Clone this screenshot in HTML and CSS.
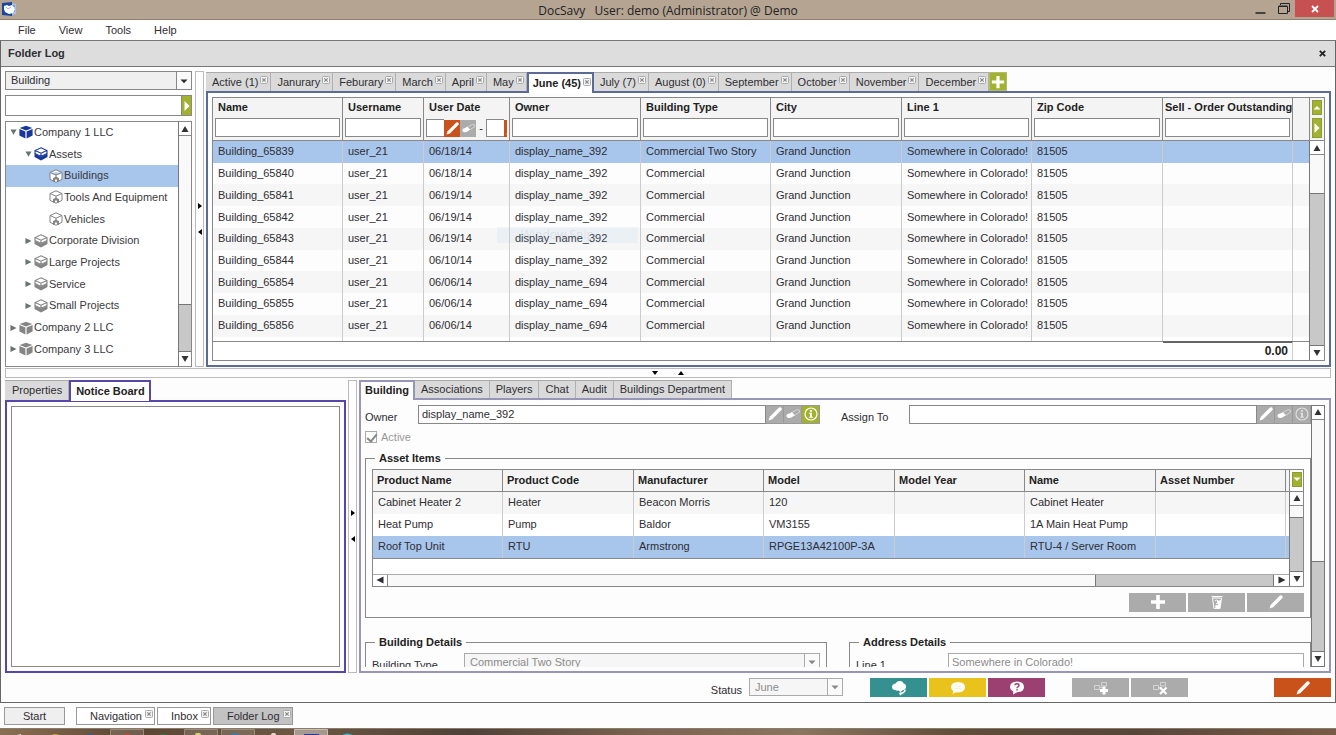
FILE: index.html
```html
<!DOCTYPE html>
<html lang="en">
<head>
    <meta charset="UTF-8">
    <meta name="viewport" content="width=device-width, initial-scale=1.0">
    <title>DocSavy</title>
    <link rel="stylesheet" href="styles.css">
</head>
<body>
    <!-- Icon sprite -->
    <svg class="sprite" aria-hidden="true">
        <symbol id="close" viewBox="0 0 8 8"><rect x=".5" y=".5" width="7" height="7" rx="1" fill="#f4f4f4" stroke="#aaa"/><path d="M2.3 2.3l3.4 3.4M5.7 2.3L2.3 5.7" stroke="#888" stroke-width="1.2"/></symbol>
        <symbol id="up" viewBox="0 0 8 8"><path d="M4 1l3.5 6h-7z" fill="currentColor"/></symbol>
        <symbol id="down" viewBox="0 0 8 8"><path d="M4 7L.5 1h7z" fill="currentColor"/></symbol>
        <symbol id="right" viewBox="0 0 8 8"><path d="M7.5 4l-7 3.5v-7z" fill="currentColor"/></symbol>
        <symbol id="left" viewBox="0 0 8 8"><path d="M.5 4l7-3.5v7z" fill="currentColor"/></symbol>
        <symbol id="drop" viewBox="0 0 8 8"><path d="M.5 2.5h7L4 6.2z" fill="currentColor"/></symbol>
        <symbol id="pencil" viewBox="0 0 16 16"><path d="M1.5 14.5l1.3-3.7L12 1.600q.9-.8 1.800 0l.6.6q.8.9 0 1.800L5.200 13.200z" fill="#fff"/></symbol>
        <symbol id="eraser" viewBox="0 0 16 16"><path d="M6 7l6-3.300q3.200-.5 2.600 2.400L9.500 9.300z" fill="none" stroke="#d5d5d5"/><path d="M1.500 9.500Q1.500 8 3.600 7.700L7 6.200l2.800 3-3 2.100q-2.200 1-4 .4-1.500-.5-1.300-2.200z" fill="#fff"/></symbol>
        <symbol id="info" viewBox="0 0 16 16"><circle cx="8" cy="8" r="6" fill="none" stroke="#fff" stroke-width="1.200"/><path d="M7 4h2v1.700H7zM6 6.800h3v4h1v1H6v-1h1v-3H6z" fill="#fff"/></symbol>
        <symbol id="plus" viewBox="0 0 16 16"><path d="M6.200 1h3.600v5.200H15v3.600H9.800V15H6.200V9.800H1V6.200h5.200z" fill="#fff"/></symbol>
        <symbol id="bin" viewBox="0 0 16 16"><path d="M2.500 2.500h11M3.500 4l1.500 10.500h6L12.500 4z" fill="none" stroke="#fff"/><path d="M8 7l4-1-1 8H6.500L6 11.500l3-.5z" fill="#fff"/><path d="M6 7q2-2 3 0t-2 3" fill="none" stroke="#fff"/></symbol>
        <symbol id="cloud" viewBox="0 0 16 16"><path d="M1 7q0-3 3.500-3.500Q6 .5 9 1q3 0 3.500 2.500Q15.500 4 15 7.500q-.5 2.500-3 2.500L9.500 12l-2-1.500q-2 .5-3-.5Q1 10 1 7z" fill="#fff"/><path d="M8 12.800l4-.8 2-2.800 1 1.500-2 2.300-4 2.500z" fill="#fff"/></symbol>
        <symbol id="bubble" viewBox="0 0 16 16"><path d="M8 2q7 .3 7 5.300T8 12.500l-2.200-.2L2.500 14l.8-3Q1 9.800 1 7.300 1 2.300 8 2z" fill="#fff"/><path d="M4.500 6h7M4.500 8.500h7" stroke="#faf0c4"/></symbol>
        <symbol id="ask" viewBox="0 0 16 16"><path d="M8 1.500q7 .3 7 5.500T8 12.200L4 14.500l.3-3Q1 9.800 1 7 1 1.800 8 1.500z" fill="#fff"/><path d="M6 5.300q0-1.500 2-1.500t2 1.600q0 1-1 1.400-1 .4-1 1.400" fill="none" stroke="#9b4070" stroke-width="1.400"/><path d="M7.200 9.200h1.600v1.300H7.200z" fill="#9b4070"/></symbol>
        <symbol id="link-add" viewBox="0 0 16 16"><path d="M1.500 5.500h5v4h-5zM8.500 2.500h5V6h-5zM6.500 7.500h3" fill="none" stroke="#d4d4d4"/><path d="M9.500 6.500h3V9H15v3h-2.500v2.500h-3V12H7V9h2.500z" fill="#fff"/></symbol>
        <symbol id="link-del" viewBox="0 0 16 16"><path d="M1.500 5.500h5v4h-5zM8.500 2.500h5V6h-5zM6.500 7.500h3" fill="none" stroke="#d4d4d4"/><path d="M8 7.500l6.500 6.500M14.500 7.500L8 14" stroke="#fff" stroke-width="2.200"/></symbol>
        <symbol id="cube" viewBox="0 0 14 14"><path d="M7 .8L13.300 3 7 5.600.7 3zM.4 4l6 2.500v7L.4 10.600zM13.600 4l-6 2.500v7l6-2.900z" fill="currentColor"/></symbol>
        <symbol id="cube-half" viewBox="0 0 14 14"><path d="M7 .8l6 2.700v3L7 9.500l-6-3v-3zM1 3.500l6 2.700 6-2.700M7 6.200v3" fill="#fff" stroke="currentColor" stroke-width="1.100"/><path d="M.5 6.500L7 9.800l6.500-3.300V10L7 13.400.5 10z" fill="currentColor"/></symbol>
        <symbol id="cube-open" viewBox="0 0 14 14"><path d="M7 .8l6 2.700v6.800L7 13.300l-6-3V3.500zM1 3.500l6 2.700 6-2.700M7 6v2" fill="#fff" stroke="currentColor"/><path d="M4 13V9.200l3-1.700 3 1.700V13H8v-2.500H6V13z" fill="currentColor"/></symbol>
    </svg>

    <header class="titlebar">
        <svg class="app-logo" viewBox="0 0 14 14"><path d="M7 1l7 1v10l-7 1z" fill="#a9c0e8"/><path d="M8 4h5M8 6.500h5M8 9h5" stroke="#5277bf"/><path d="M0 1l10-1v14L0 13z" fill="#17479e"/><path d="M2 4l3-1 2 1 3-1 3 4-2 4-4 1-4-2-1-3z" fill="#fff"/><path d="M4 5l2 2 3-2" fill="none" stroke="#9bb0db"/></svg>
        <h1 class="app-title">DocSavy &nbsp; User: demo (Administrator) @ Demo</h1>
        <div class="window-buttons">
            <button class="win-btn" aria-label="Minimize"><svg width="11" height="12" viewBox="0 0 11 12"><path d="M.5 11h10" stroke="#222" stroke-width="1.500"/></svg></button>
            <button class="win-btn" aria-label="Restore"><svg width="12" height="11" viewBox="0 0 12 11"><path d="M2.500 2V.5h9v8H10" fill="none" stroke="#222"/><path d="M.5 3.500h9v7h-9zM.5 3h9" fill="none" stroke="#222"/></svg></button>
            <button class="win-btn win-close" aria-label="Close"><svg width="8" height="8" viewBox="0 0 8 8"><path d="M1 1l6 6M7 1L1 7" stroke="#fff" stroke-width="1.800"/></svg></button>
        </div>
    </header>

    <nav class="menubar">
        <button>File</button>
        <button>View</button>
        <button>Tools</button>
        <button>Help</button>
    </nav>

    <main class="window">
        <div class="window-head">
            <h2>Folder Log</h2>
            <button class="window-x" aria-label="Close Folder Log"><svg width="7" height="7" viewBox="0 0 7 7"><path d="M.8.8l5.400 5.400M6.200.8L.8 6.200" stroke="#222" stroke-width="1.800"/></svg></button>
        </div>

        <div class="panes">
            <section class="upper">
                <aside class="sidebar">
                    <div class="select-box">
                        <select aria-label="Folder type"><option>Building</option></select>
                        <span class="select-arrow"><svg width="8" height="8"><use href="#drop"/></svg></span>
                    </div>
                    <div class="search">
                        <input type="text" aria-label="Search folders">
                        <button class="green" aria-label="Search"><svg width="6" height="12" viewBox="0 0 6 12"><path d="M.5 1l5 5-5 5z" fill="#fff"/></svg></button>
                    </div>
                    <div class="tree-box">
                        <ul class="tree">
                            <li class="lvl0 blue"><svg class="arrow"><use href="#down"/></svg><svg class="node"><use href="#cube"/></svg>Company 1 LLC</li>
                            <li class="lvl1 blue"><svg class="arrow"><use href="#down"/></svg><svg class="node"><use href="#cube-half"/></svg>Assets</li>
                            <li class="lvl2 selected"><svg class="node"><use href="#cube-open"/></svg>Buildings</li>
                            <li class="lvl2"><svg class="node"><use href="#cube-open"/></svg>Tools And Equipment</li>
                            <li class="lvl2"><svg class="node"><use href="#cube-open"/></svg>Vehicles</li>
                            <li class="lvl1"><svg class="arrow"><use href="#right"/></svg><svg class="node"><use href="#cube-half"/></svg>Corporate Division</li>
                            <li class="lvl1"><svg class="arrow"><use href="#right"/></svg><svg class="node"><use href="#cube-half"/></svg>Large Projects</li>
                            <li class="lvl1"><svg class="arrow"><use href="#right"/></svg><svg class="node"><use href="#cube-half"/></svg>Service</li>
                            <li class="lvl1"><svg class="arrow"><use href="#right"/></svg><svg class="node"><use href="#cube-half"/></svg>Small Projects</li>
                            <li class="lvl0"><svg class="arrow"><use href="#right"/></svg><svg class="node"><use href="#cube"/></svg>Company 2 LLC</li>
                            <li class="lvl0"><svg class="arrow"><use href="#right"/></svg><svg class="node"><use href="#cube"/></svg>Company 3 LLC</li>
                        </ul>
                        <div class="scroll scroll-tree">
                            <button aria-label="Scroll up"><svg width="8" height="8"><use href="#up"/></svg></button>
                            <span class="track"></span>
                            <span class="thumb"></span>
                            <button aria-label="Scroll down"><svg width="8" height="8"><use href="#down"/></svg></button>
                        </div>
                    </div>
                </aside>

                <div class="split-v">
                    <svg width="4" height="6" viewBox="0 0 4 6"><path d="M0 0l4 3-4 3z"/></svg>
                    <svg width="4" height="6" viewBox="0 0 4 6"><path d="M4 0L0 3l4 3z"/></svg>
                </div>

                <section class="tabset months">
                    <div class="tabs">
                        <div class="tab"><button>Active (1)</button><button class="tab-x" aria-label="Close tab"><svg><use href="#close"/></svg></button></div>
                        <div class="tab"><button>Janurary</button><button class="tab-x" aria-label="Close tab"><svg><use href="#close"/></svg></button></div>
                        <div class="tab"><button>Feburary</button><button class="tab-x" aria-label="Close tab"><svg><use href="#close"/></svg></button></div>
                        <div class="tab"><button>March</button><button class="tab-x" aria-label="Close tab"><svg><use href="#close"/></svg></button></div>
                        <div class="tab"><button>April</button><button class="tab-x" aria-label="Close tab"><svg><use href="#close"/></svg></button></div>
                        <div class="tab"><button>May</button><button class="tab-x" aria-label="Close tab"><svg><use href="#close"/></svg></button></div>
                        <div class="tab active"><button>June (45)</button><button class="tab-x" aria-label="Close tab"><svg><use href="#close"/></svg></button></div>
                        <div class="tab"><button>July (7)</button><button class="tab-x" aria-label="Close tab"><svg><use href="#close"/></svg></button></div>
                        <div class="tab"><button>August (0)</button><button class="tab-x" aria-label="Close tab"><svg><use href="#close"/></svg></button></div>
                        <div class="tab"><button>September</button><button class="tab-x" aria-label="Close tab"><svg><use href="#close"/></svg></button></div>
                        <div class="tab"><button>October</button><button class="tab-x" aria-label="Close tab"><svg><use href="#close"/></svg></button></div>
                        <div class="tab"><button>November</button><button class="tab-x" aria-label="Close tab"><svg><use href="#close"/></svg></button></div>
                        <div class="tab"><button>December</button><button class="tab-x" aria-label="Close tab"><svg><use href="#close"/></svg></button></div>
                        <button class="tab-add green" aria-label="Add tab"><svg width="14" height="14"><use href="#plus"/></svg></button>
                    </div>
                    <div class="tab-body">
                        <div class="grid">
                            <table class="log">
                                <colgroup>
                                    <col class="w130"><col class="w81"><col class="w86"><col class="w131"><col class="w130"><col class="w131"><col class="w130"><col class="w131"><col class="w130"><col>
                                </colgroup>
                                <thead>
                                    <tr>
                                        <th><label>Name<input type="text"></label></th>
                                        <th><label>Username<input type="text"></label></th>
                                        <th>
                                            <label for="dateFrom">User Date</label>
                                            <div class="date-filter">
                                                <input type="text" id="dateFrom">
                                                <button class="orange" aria-label="Pick start date"><svg width="15" height="15"><use href="#pencil"/></svg></button>
                                                <button class="grey" aria-label="Clear start date"><svg width="15" height="15"><use href="#eraser"/></svg></button>
                                                <span>-</span>
                                                <input type="text" aria-label="End date">
                                                <button class="orange" aria-label="Pick end date"><svg width="15" height="15"><use href="#pencil"/></svg></button>
                                            </div>
                                        </th>
                                        <th><label>Owner<input type="text"></label></th>
                                        <th><label>Building Type<input type="text"></label></th>
                                        <th><label>City<input type="text"></label></th>
                                        <th><label>Line 1<input type="text"></label></th>
                                        <th><label>Zip Code<input type="text"></label></th>
                                        <th><label class="long">Sell - Order Outstanding<input type="text"></label></th>
                                        <th></th>
                                    </tr>
                                </thead>
                                <tbody>
                                    <tr class="selected"><td>Building_65839</td><td>user_21</td><td>06/18/14</td><td>display_name_392</td><td>Commercial Two Story</td><td>Grand Junction</td><td>Somewhere in Colorado!</td><td>81505</td><td></td><td></td></tr>
                                    <tr><td>Building_65840</td><td>user_21</td><td>06/18/14</td><td>display_name_392</td><td>Commercial</td><td>Grand Junction</td><td>Somewhere in Colorado!</td><td>81505</td><td></td><td></td></tr>
                                    <tr><td>Building_65841</td><td>user_21</td><td>06/19/14</td><td>display_name_392</td><td>Commercial</td><td>Grand Junction</td><td>Somewhere in Colorado!</td><td>81505</td><td></td><td></td></tr>
                                    <tr><td>Building_65842</td><td>user_21</td><td>06/19/14</td><td>display_name_392</td><td>Commercial</td><td>Grand Junction</td><td>Somewhere in Colorado!</td><td>81505</td><td></td><td></td></tr>
                                    <tr><td>Building_65843</td><td>user_21</td><td>06/19/14</td><td class="ghost-cell"><span class="ghost">Window Snip</span>display_name_392</td><td>Commercial</td><td>Grand Junction</td><td>Somewhere in Colorado!</td><td>81505</td><td></td><td></td></tr>
                                    <tr><td>Building_65844</td><td>user_21</td><td>06/10/14</td><td>display_name_392</td><td>Commercial</td><td>Grand Junction</td><td>Somewhere in Colorado!</td><td>81505</td><td></td><td></td></tr>
                                    <tr><td>Building_65854</td><td>user_21</td><td>06/06/14</td><td>display_name_694</td><td>Commercial</td><td>Grand Junction</td><td>Somewhere in Colorado!</td><td>81505</td><td></td><td></td></tr>
                                    <tr><td>Building_65855</td><td>user_21</td><td>06/06/14</td><td>display_name_694</td><td>Commercial</td><td>Grand Junction</td><td>Somewhere in Colorado!</td><td>81505</td><td></td><td></td></tr>
                                    <tr><td>Building_65856</td><td>user_21</td><td>06/06/14</td><td>display_name_694</td><td>Commercial</td><td>Grand Junction</td><td>Somewhere in Colorado!</td><td>81505</td><td></td><td></td></tr>
                                    <tr class="spacer"><td></td><td></td><td></td><td></td><td></td><td></td><td></td><td></td><td></td><td></td></tr>
                                </tbody>
                                <tfoot>
                                    <tr><td colspan="8"></td><td class="total">0.00</td><td></td></tr>
                                </tfoot>
                            </table>
                            <div class="grid-side">
                                <div class="side-head">
                                    <button class="green side-up" aria-label="Collapse filters"><svg width="8" height="8" viewBox="0 0 8 8"><path d="M4 2l3.500 3.500h-7z" fill="#fff"/></svg></button>
                                    <button class="green side-go" aria-label="Apply filters"><svg width="6" height="12" viewBox="0 0 6 12"><path d="M.5 1l5 5-5 5z" fill="#fff"/></svg></button>
                                </div>
                                <div class="scroll scroll-log">
                                    <button aria-label="Scroll up"><svg width="8" height="8"><use href="#up"/></svg></button>
                                    <span class="track"></span>
                                    <span class="thumb"></span>
                                    <button aria-label="Scroll down"><svg width="8" height="8"><use href="#down"/></svg></button>
                                </div>
                            </div>
                        </div>
                    </div>
                </section>
            </section>

            <div class="split-h">
                <svg width="6" height="4" viewBox="0 0 6 4"><path d="M0 0h6L3 4z"/></svg>
                <svg width="6" height="4" viewBox="0 0 6 4"><path d="M0 4h6L3 0z"/></svg>
            </div>

            <section class="lower">
                <section class="tabset notice">
                    <div class="tabs">
                        <div class="tab"><button>Properties</button></div>
                        <div class="tab active"><button>Notice Board</button></div>
                    </div>
                    <div class="tab-body"><div class="board"></div></div>
                </section>

                <div class="split-v">
                    <svg width="4" height="6" viewBox="0 0 4 6"><path d="M0 0l4 3-4 3z"/></svg>
                    <svg width="4" height="6" viewBox="0 0 4 6"><path d="M4 0L0 3l4 3z"/></svg>
                </div>

                <section class="tabset details">
                    <div class="tabs">
                        <div class="tab active"><button>Building</button></div>
                        <div class="tab"><button>Associations</button></div>
                        <div class="tab"><button>Players</button></div>
                        <div class="tab"><button>Chat</button></div>
                        <div class="tab"><button>Audit</button></div>
                        <div class="tab"><button>Buildings Department</button></div>
                    </div>
                    <div class="tab-body">
                        <form class="form">
                            <div class="owner-row">
                                <label for="owner" class="owner-label">Owner</label>
                                <div class="picker">
                                    <input type="text" id="owner" value="display_name_392">
                                    <button type="button" class="grey" aria-label="Edit owner"><svg width="16" height="16"><use href="#pencil"/></svg></button>
                                    <button type="button" class="grey" aria-label="Clear owner"><svg width="16" height="16"><use href="#eraser"/></svg></button>
                                    <button type="button" class="green" aria-label="Owner info"><svg width="16" height="16"><use href="#info"/></svg></button>
                                </div>
                                <label for="assign" class="assign-label">Assign To</label>
                                <div class="picker">
                                    <input type="text" id="assign">
                                    <button type="button" class="grey" aria-label="Edit assignee"><svg width="16" height="16"><use href="#pencil"/></svg></button>
                                    <button type="button" class="grey" aria-label="Clear assignee"><svg width="16" height="16"><use href="#eraser"/></svg></button>
                                    <button type="button" class="grey faded" aria-label="Assignee info"><svg width="16" height="16"><use href="#info"/></svg></button>
                                </div>
                            </div>
                            <label class="check"><input type="checkbox" checked disabled>Active</label>

                            <fieldset class="assets">
                                <legend>Asset Items</legend>
                                <div class="asset-grid">
                                    <div class="asset-main">
                                        <table class="asset-table">
                                            <colgroup>
                                                <col class="w130"><col class="w131"><col class="w130"><col class="w131"><col class="w130"><col class="w131"><col class="w130"><col>
                                            </colgroup>
                                            <thead>
                                                <tr><th>Product Name</th><th>Product Code</th><th>Manufacturer</th><th>Model</th><th>Model Year</th><th>Name</th><th>Asset Number</th><th></th></tr>
                                            </thead>
                                            <tbody>
                                                <tr><td>Cabinet Heater 2</td><td>Heater</td><td>Beacon Morris</td><td>120</td><td></td><td>Cabinet Heater</td><td></td><td></td></tr>
                                                <tr><td>Heat Pump</td><td>Pump</td><td>Baldor</td><td>VM3155</td><td></td><td>1A Main Heat Pump</td><td></td><td></td></tr>
                                                <tr class="selected"><td>Roof Top Unit</td><td>RTU</td><td>Armstrong</td><td>RPGE13A42100P-3A</td><td></td><td>RTU-4 / Server Room</td><td></td><td></td></tr>
                                            </tbody>
                                        </table>
                                        <div class="hscroll">
                                            <button type="button" aria-label="Scroll left"><svg width="8" height="8"><use href="#left"/></svg></button>
                                            <span class="track"></span>
                                            <span class="thumb"></span>
                                            <button type="button" aria-label="Scroll right"><svg width="8" height="8"><use href="#right"/></svg></button>
                                        </div>
                                    </div>
                                    <div class="asset-side">
                                        <div class="asset-side-head"><button type="button" class="green side-up" aria-label="Expand filters"><svg width="8" height="8" viewBox="0 0 8 8"><path d="M4 6L.5 2.500h7z" fill="#fff"/></svg></button></div>
                                        <div class="scroll scroll-assets">
                                            <button type="button" aria-label="Scroll up"><svg width="8" height="8"><use href="#up"/></svg></button>
                                            <span class="track"></span>
                                            <span class="thumb"></span>
                                            <button type="button" aria-label="Scroll down"><svg width="8" height="8"><use href="#down"/></svg></button>
                                        </div>
                                    </div>
                                </div>
                                <div class="asset-actions">
                                    <button type="button" class="action grey" aria-label="Add asset"><svg><use href="#plus"/></svg></button>
                                    <button type="button" class="action grey" aria-label="Delete asset"><svg><use href="#bin"/></svg></button>
                                    <button type="button" class="action grey" aria-label="Edit asset"><svg><use href="#pencil"/></svg></button>
                                </div>
                            </fieldset>

                            <div class="detail-sets">
                                <fieldset>
                                    <legend>Building Details</legend>
                                    <div class="detail-row">
                                        <label for="buildingType">Building Type</label>
                                        <div class="select-box disabled">
                                            <select id="buildingType" disabled><option>Commercial Two Story</option></select>
                                            <span class="select-arrow"><svg width="8" height="8"><use href="#drop"/></svg></span>
                                        </div>
                                    </div>
                                </fieldset>
                                <fieldset>
                                    <legend>Address Details</legend>
                                    <div class="detail-row">
                                        <label for="line1">Line 1</label>
                                        <input type="text" id="line1" value="Somewhere in Colorado!" disabled>
                                    </div>
                                </fieldset>
                            </div>
                        </form>
                        <div class="scroll scroll-form">
                            <button aria-label="Scroll up"><svg width="8" height="8"><use href="#up"/></svg></button>
                            <span class="track"></span>
                            <span class="thumb"></span>
                            <button aria-label="Scroll down"><svg width="8" height="8"><use href="#down"/></svg></button>
                        </div>
                    </div>
                </section>
            </section>

            <footer class="statusbar">
                <label for="status">Status</label>
                <div class="select-box disabled status-select">
                    <select id="status" disabled><option>June</option></select>
                    <span class="select-arrow"><svg width="8" height="8"><use href="#drop"/></svg></span>
                </div>
                <div class="action-group talk">
                    <button class="action teal" aria-label="Share"><svg><use href="#cloud"/></svg></button>
                    <button class="action yellow" aria-label="Comment"><svg><use href="#bubble"/></svg></button>
                    <button class="action purple" aria-label="Question"><svg><use href="#ask"/></svg></button>
                </div>
                <div class="action-group links">
                    <button class="action grey" aria-label="Add link"><svg><use href="#link-add"/></svg></button>
                    <button class="action grey" aria-label="Remove link"><svg><use href="#link-del"/></svg></button>
                </div>
                <button class="action orange" aria-label="Edit"><svg><use href="#pencil"/></svg></button>
            </footer>
        </div>
    </main>

    <nav class="dock">
        <button class="start">Start</button>
        <div class="dock-item"><button>Navigation</button><button class="tab-x" aria-label="Close Navigation"><svg><use href="#close"/></svg></button></div>
        <div class="dock-item"><button>Inbox</button><button class="tab-x" aria-label="Close Inbox"><svg><use href="#close"/></svg></button></div>
        <div class="dock-item current"><button>Folder Log</button><button class="tab-x" aria-label="Close Folder Log"><svg><use href="#close"/></svg></button></div>
    </nav>

    <!-- Desktop taskbar, only its top edge shows -->
    <div class="taskbar">
        <svg width="400" height="7" viewBox="0 0 400 7">
            <path d="M110.500 7V.5h33V7M184.500 7V.5h33V7M221.500 7V.5h33V7" fill="#ffffff22" stroke="#9a8a78"/>
            <path d="M294.500 7V.5h33V7" fill="#ffffff66" stroke="#c8beb4"/>
            <path d="M12 7l9-2v2z" fill="#ddd"/>
            <path d="M50 7q4-3 9-1v1z" fill="#e8c620"/>
            <path d="M83 7q6-4 13 0z" fill="#2c5aa0"/>
            <path d="M121 7q6-4 11 0z" fill="#d8412c"/>
            <path d="M157 7q6-4 13 0z" fill="#237a45"/>
            <path d="M194 7l2-3h4l2 3z" fill="#d8d06a"/>
            <path d="M229 7q5-5 13 0z" fill="#2283c8"/>
            <path d="M270 7l2-3h3l2 3z" fill="#e6d0c8"/>
            <path d="M304 7V5h15v2z" fill="#1d3d9c"/>
            <path d="M341 7q6-5 13 0z" fill="#36b1e4"/>
        </svg>
    </div>
</body>
</html>
```
FILE: styles.css
```css
* {
    box-sizing: border-box;
}
body {
    margin: 0;
    height: 100vh;
    display: flex;
    flex-direction: column;
    overflow: hidden;
    background: #fdfdfd;
    color: #2e2e33;
    font-family: "Liberation Sans", Arial, sans-serif;
    font-size: 11px;
    line-height: 13px;
}
button, input, select {
    font: inherit;
    color: inherit;
    margin: 0;
    border-radius: 0;
}
button {
    padding: 0;
    border: 0;
    background: none;
    display: flex;
    align-items: center;
    justify-content: center;
}
input[type="text"] {
    min-width: 0;
    border: 1px solid #888;
    background: #fff;
    padding: 0 3px;
}
h1, h2, ul {
    margin: 0;
    padding: 0;
}
svg {
    display: block;
    flex: none;
}
.sprite {
    position: absolute;
    width: 0;
    height: 0;
}

/* colours for buttons */
.green { background: #a2b230; }
.orange { background: #c8521a; }
.grey { background: #ababab; }
.teal { background: #35918f; }
.yellow { background: #e9c21c; }
.purple { background: #9b4070; }

/* title and menu */
.titlebar {
    flex: none;
    height: 20px;
    display: grid;
    grid-template-columns: 1fr auto 1fr;
    background: #b5a492;
    border-bottom: 1px solid #8f8071;
}
.app-logo {
    width: 14px;
    height: 14px;
    margin: 2px 0 0 2px;
}
.app-title {
    font-family: "Open Sans", "Noto Sans", sans-serif;
    font-size: 12px;
    font-weight: normal;
    line-height: 22px;
    color: #222;
}
.window-buttons {
    display: flex;
    justify-content: flex-end;
    margin-right: 2px;
}
.win-btn {
    width: 23px;
    height: 16px;
}
.win-close {
    width: 39px;
    height: 17px;
    background: #c75050;
}
.menubar {
    flex: none;
    height: 20px;
    display: flex;
    gap: 23px;
    padding-left: 18px;
    background: #fff;
}

/* main window */
.window {
    flex: 1;
    min-height: 0;
    display: flex;
    flex-direction: column;
    border: 1px solid #666;
    border-top-color: #777;
}
.window-head {
    flex: none;
    height: 26px;
    display: flex;
    align-items: center;
    justify-content: space-between;
    padding: 0 9px 0 7px;
    background: #ddd;
    border-bottom: 1px solid #777;
}
.window-head h2 {
    font-size: 11px;
}
.panes {
    flex: 1;
    min-height: 0;
    display: flex;
    flex-direction: column;
    padding: 4px 4px 5px;
}
.upper {
    flex: 295;
    min-height: 0;
    display: flex;
}
.lower {
    flex: 293;
    min-height: 0;
    display: flex;
}
.split-v {
    flex: none;
    width: 9px;
    display: flex;
    flex-direction: column;
    align-items: center;
    justify-content: center;
    gap: 20px;
    margin: 0 2px;
    border: 1px solid #bbb;
}
.split-h {
    flex: none;
    height: 10px;
    display: flex;
    align-items: center;
    justify-content: center;
    gap: 20px;
    margin: 1px 0 2px;
    border: 1px solid #bbb;
}

/* drop-downs */
.select-box {
    position: relative;
    height: 19px;
}
.select-box select {
    display: block;
    width: 100%;
    height: 100%;
    padding: 0 18px 0 5px;
    appearance: none;
    border: 1px solid #888;
    background: #f0f0f0;
    opacity: 1;
}
.select-arrow {
    position: absolute;
    top: 0;
    right: 0;
    bottom: 0;
    width: 16px;
    display: flex;
    align-items: center;
    justify-content: center;
    border: 1px solid #888;
    background: #fafafa;
    pointer-events: none;
}
.disabled select {
    color: #8c8c8c;
    border-color: #aaa;
    background: #f6f6f6;
}
.disabled .select-arrow {
    color: #888;
    border-color: #aaa;
}

/* sidebar */
.sidebar {
    flex: none;
    width: 187px;
    display: flex;
    flex-direction: column;
    gap: 5px;
    margin-right: 1px;
}
.search {
    display: flex;
    height: 21px;
    border: 1px solid #888;
}
.search input {
    flex: 1;
    border: 0;
}
.search button {
    width: 10px;
    border-left: 1px solid #888;
}
.tree-box {
    flex: 1;
    min-height: 0;
    display: flex;
    border: 1px solid #888;
    background: #fff;
}
.tree {
    flex: 1;
    display: flex;
    flex-direction: column;
    padding-bottom: 5px;
    list-style: none;
}
.tree li {
    flex: 1;
    display: flex;
    align-items: center;
    padding-bottom: 1px;
    color: #3a3a3e;
}
.tree .arrow {
    width: 7px;
    height: 8px;
    margin-right: 2px;
    color: #6b7370;
}
.tree .node {
    width: 14px;
    height: 14px;
    margin-right: 1px;
    color: #858585;
}
.tree .blue .node {
    color: #17389a;
}
.tree .lvl0 { padding-left: 4px; }
.tree .lvl1 { padding-left: 19px; }
.tree .lvl2 { padding-left: 43px; }
.selected {
    background: #a8c5ec;
}

/* scrollbars */
.scroll {
    flex: none;
    width: 13px;
    display: flex;
    flex-direction: column;
    border-left: 1px solid #777;
    background: #f9f9f9;
}
.scroll button {
    flex: none;
    height: 14px;
    background: #fff;
    color: #333;
}
.scroll button:first-child {
    border-bottom: 1px solid #888;
}
.thumb {
    background: #c8c8c8;
    border-top: 1px solid #777;
    border-bottom: 1px solid #777;
}
.scroll-tree .track { flex: 169; }
.scroll-tree .thumb { flex: 46; }
.scroll-log .track { flex: 38; }
.scroll-log .thumb { flex: 152; }
.scroll-form .track { flex: 143; }
.scroll-form .thumb { flex: 90; }
.scroll-assets .track { flex: 12; }
.scroll-assets .thumb { flex: 55; }

/* tab panels */
.tabset {
    flex: 1;
    min-width: 0;
    display: flex;
    flex-direction: column;
    --edge: #5b6b96;
}
.tabs {
    flex: none;
    height: 20px;
    display: flex;
    padding-top: 1px;
}
.tab {
    display: flex;
    align-items: center;
    gap: 2px;
    padding: 0 2px 0 6px;
    background: #dadada;
    border-top: 1px solid #aaa;
    border-right: 1px solid #b0b0b0;
}
.tab-x {
    width: 8px;
    height: 8px;
    margin-bottom: 4px;
}
.tab-x svg {
    width: 8px;
    height: 8px;
}
.tab.active {
    position: relative;
    height: 21px;
    padding-left: 4px;
    padding-right: 1px;
    background: #fff;
    border: 2px solid var(--edge);
    border-bottom: 0;
    font-weight: bold;
    color: #222;
}
.tab-add {
    width: 18px;
    border: 1px solid #b4bd6a;
}
.tab-body {
    flex: 1;
    min-height: 0;
    border: 2px solid var(--edge);
    background: #fdfdfd;
}
.months .tab-body {
    padding: 4px;
}

/* log grid */
.grid {
    height: 100%;
    display: grid;
    grid-template-columns: 1fr 15px;
    border: 1px solid #888;
}
table {
    width: 100%;
    table-layout: fixed;
    border-collapse: separate;
    border-spacing: 0;
}
.log {
    height: 100%;
}
.w130 { width: 130px; }
.w131 { width: 131px; }
.w81 { width: 81px; }
.w86 { width: 86px; }
th {
    padding: 0 3px 0 4px;
    text-align: left;
    white-space: nowrap;
    overflow: hidden;
    background: #f4f4f4;
    border-right: 1px solid #888;
    border-bottom: 1px solid #888;
    color: #222;
}
td {
    padding: 0 0 0 5px;
    white-space: nowrap;
    border-right: 1px solid #ccc;
}
th:last-child, td:last-child {
    border-right: 0;
}
.log thead tr {
    height: 43px;
}
.log th {
    padding: 0 2px;
}
.log th label {
    display: block;
    text-indent: 3px;
}
.log th label.long {
    text-indent: 0;
}
.log th label input {
    display: block;
    width: 100%;
}
.log th input {
    height: 19px;
    margin-top: 4px;
}
.date-filter {
    display: flex;
    align-items: center;
    height: 18px;
    margin-top: 5px;
    overflow: hidden;
    font-weight: normal;
}
.log .date-filter input {
    flex: none;
    width: 18px;
    height: 18px;
    margin: 0;
    border-right: 0;
}
.date-filter button {
    flex: none;
    width: 16px;
    height: 17px;
}
.date-filter span {
    flex: none;
    width: 10px;
    text-align: center;
}
.log tbody tr:nth-child(odd) td {
    background: #f6f6f6;
}
.log tbody tr.selected td {
    background: #a8c5ec;
}
.log tbody tr.spacer, .log tbody tr.spacer td {
    height: 4px;
    background: #fff;
}
.log tfoot tr {
    height: 19px;
}
.log tfoot td {
    border-top: 1px solid #888;
    border-right: 0;
    background: #fff;
}
.log tfoot .total {
    padding-right: 4px;
    border-top: 2px solid #666;
    border-right: 1px solid #ccc;
    text-align: right;
    font-size: 12px;
    font-weight: bold;
    color: #222;
}
.ghost-cell {
    position: relative;
}
.ghost {
    position: absolute;
    top: -1px;
    left: -13px;
    right: 2px;
    height: 16px;
    padding-left: 24px;
    background: rgba(160, 200, 240, 0.12);
    color: rgba(90, 100, 110, 0.15);
    font-family: "Open Sans", sans-serif;
    font-size: 12px;
    line-height: 16px;
    pointer-events: none;
}
.grid-side {
    display: flex;
    flex-direction: column;
}
.side-head {
    flex: none;
    height: 43px;
    display: flex;
    flex-direction: column;
    align-items: center;
    gap: 3px;
    padding-top: 2px;
    border-left: 1px solid #888;
    border-bottom: 1px solid #888;
    background: #f4f4f4;
}
.side-up {
    width: 10px;
    height: 15px;
    border: 1px solid #8f9c32;
}
.side-go {
    width: 10px;
    height: 20px;
    border: 1px solid #8f9c32;
}
.grid-side .scroll {
    flex: 1;
    width: 15px;
}

/* notice board */
.notice {
    flex: none;
    width: 26%;
    max-width: 341px;
    --edge: #5548a8;
}
.notice .tabs, .details .tabs {
    padding-top: 0;
}
.notice .tab {
    padding: 0 6px 0 7px;
}
.notice .tab.active {
    padding: 0 4px 0 5px;
}
.board {
    height: 100%;
    border: 1px solid #888;
    background: #fff;
}
.notice .tab-body {
    padding: 4px;
}

/* details form */
.details {
    --edge: #9896b8;
}
.details .tabs {
    height: 18px;
}
.details .tab {
    padding: 0 6px;
}
.details .tab.active {
    height: 20px;
    padding: 0 4px;
}
.details .tab-body {
    display: flex;
    padding: 5px 4px 4px;
}
.form {
    flex: 1;
    min-width: 0;
    overflow: hidden;
}
.owner-row {
    display: flex;
    align-items: flex-end;
}
.owner-label {
    width: 53px;
}
.assign-label {
    width: 68px;
    margin-left: 21px;
}
.picker {
    flex: 1;
    height: 19px;
    display: flex;
}
.picker input {
    flex: 1;
}
.picker button {
    width: 18px;
    border: 1px solid #999;
    border-left: 0;
}
.faded svg {
    opacity: 0.6;
}
.check {
    display: flex;
    align-items: center;
    gap: 4px;
    margin-top: 7px;
    color: #999;
}
.check input {
    appearance: none;
    position: relative;
    width: 12px;
    height: 12px;
    border: 1px solid #aaa;
}
.check input::after {
    content: "";
    position: absolute;
    left: 3px;
    top: 0;
    width: 4px;
    height: 8px;
    border: solid #888;
    border-width: 0 2px 2px 0;
    transform: rotate(40deg);
}
fieldset {
    min-width: 0;
    margin: 0;
    padding: 4px 6px 5px;
    border: 1px solid #888;
}
legend {
    margin-left: 3px;
    padding: 0 4px;
    font-weight: bold;
    color: #222;
}
.assets {
    margin-top: 8px;
}
.asset-grid {
    display: flex;
    border: 1px solid #888;
    background: #fff;
}
.asset-main {
    flex: 1;
    min-width: 0;
    display: flex;
    flex-direction: column;
}
.asset-table {
    border-bottom: 1px solid #888;
}
.asset-table tr {
    height: 22px;
}
.asset-table tbody tr:first-child {
    background: #f6f6f6;
}
.hscroll {
    height: 12px;
    display: flex;
    margin-top: auto;
    border-top: 1px solid #aaa;
    background: #f9f9f9;
}
.hscroll button {
    width: 15px;
    background: #fff;
}
.hscroll button:first-child {
    border-right: 1px solid #888;
}
.hscroll .track { flex: 709; }
.hscroll .thumb {
    flex: 178;
    border: 0;
    border-left: 1px solid #777;
    border-right: 1px solid #777;
}
.asset-side {
    display: flex;
    flex-direction: column;
}
.asset-side-head {
    height: 22px;
    padding: 2px 0 0 2px;
    border-left: 1px solid #888;
    border-bottom: 1px solid #888;
}
.asset-side .scroll {
    height: 94px;
    width: 14px;
}
.asset-actions {
    display: flex;
    justify-content: flex-end;
    gap: 2px;
    margin-top: 6px;
}
.action {
    width: 57px;
    height: 19px;
}
.action svg {
    width: 16px;
    height: 16px;
}
.detail-sets {
    display: grid;
    grid-template-columns: 1fr 1fr;
    gap: 22px;
    margin-top: 18px;
}
.detail-row {
    display: flex;
    align-items: flex-end;
}
.detail-row label {
    width: 92px;
}
.detail-row .select-box, .detail-row input {
    flex: 1;
    height: 19px;
}
.detail-row input {
    border-color: #aaa;
    color: #8c8c8c;
}
.scroll-form {
    width: 14px;
    border: 1px solid #777;
}

/* status bar */
.statusbar {
    flex: none;
    height: 24px;
    display: flex;
    align-items: flex-end;
    justify-content: flex-end;
}
.statusbar label {
    margin-right: 7px;
}
.status-select {
    width: 94px;
    height: 18px;
    margin-bottom: 1px;
}
.action-group {
    display: flex;
    gap: 2px;
}
.talk {
    margin: 0 27px;
}
.links {
    margin-right: 86px;
}

/* open windows */
.dock {
    flex: none;
    height: 25px;
    display: flex;
    gap: 2px;
    padding: 4px 4px 3px;
}
.start {
    width: 61px;
    margin-right: 9px;
    border: 1px solid #999;
    background: #efefef;
}
.dock-item {
    display: flex;
    align-items: center;
    gap: 3px;
    padding: 0 1px 0 13px;
    border: 1px solid #999;
    background: #fff;
}
.dock-item.current {
    background: #c2c2c2;
}
.taskbar {
    flex: none;
    height: 7px;
    border-top: 1px solid #8a7c6c;
    background: linear-gradient(90deg, #8b6f52, #5b4634 10%, #6d5844 22%, #4f4137 35%, #7a6350 48%, #8a7560 60%, #5f4c39 72%, #57473a 85%, #7a5a46);
}
```
